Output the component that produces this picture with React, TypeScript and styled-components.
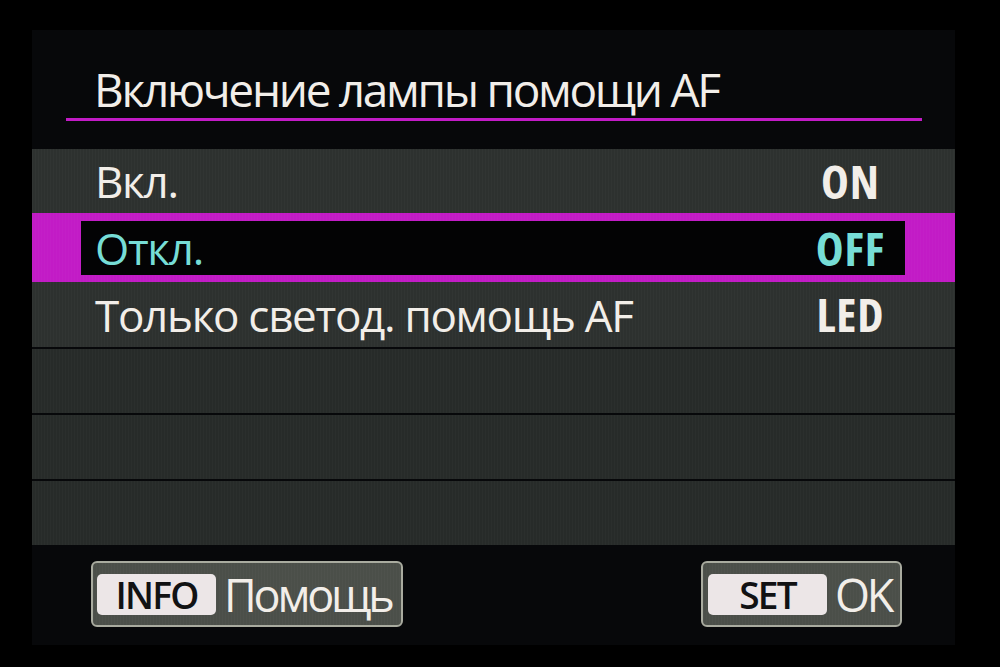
import React from "react";
import styled, { createGlobalStyle } from "styled-components";

const Global = createGlobalStyle`
  html, body { margin: 0; padding: 0; background: #000; }
  body { font-family: "Open Sans", "DejaVu Sans", sans-serif; }
  * { box-sizing: border-box; }
`;

const MAGENTA = "#c21bc6";
const CYAN = "#76ddd6";
const WHITE = "#f2eee9";

const Frame = styled.div`
  width: 1000px;
  height: 667px;
  background: #000;
  padding: 30px 0 0 32px;
`;

const Screen = styled.div`
  width: 923px;
  height: 615px;
  background: #07080a;
  display: flex;
  flex-direction: column;
`;

const Header = styled.header`
  height: 119px;
  padding-top: 33px;
  display: flex;
  flex-direction: column;
`;

const Title = styled.h1`
  margin: 0;
  padding-left: 62px;
  font-family: "Open Sans", "DejaVu Sans", sans-serif;
  font-weight: 400;
  font-size: 46px;
  line-height: 52px;
  letter-spacing: -2.3px;
  color: ${WHITE};
  white-space: nowrap;
`;

const Rule = styled.div`
  height: 3px;
  margin: 3px 33px 0 34px;
  background: ${MAGENTA};
`;

const List = styled.div`
  display: flex;
  flex-direction: column;
`;

const stripes = `repeating-linear-gradient(90deg, rgba(255,255,255,0.018) 0 1px, rgba(0,0,0,0) 1px 3px)`;

const Row = styled.div<{ $selected?: boolean; $height: number; $gap?: number; $dim?: boolean }>`
  height: ${(p) => p.$height}px;
  margin-top: ${(p) => p.$gap ?? 0}px;
  padding: ${(p) => (p.$selected ? "8px 50px 7px 49px" : "0 50px 0 49px")};
  background: ${(p) => (p.$selected ? MAGENTA : p.$dim ? "#272b29" : "#2d312f")};
  background-image: ${stripes};
  display: flex;
`;

const RowInner = styled.div<{ $selected?: boolean }>`
  flex: 1;
  display: grid;
  grid-template-columns: 1fr 110px;
  align-items: center;
  padding-left: 14px;
  background: ${(p) => (p.$selected ? "#030304" : "transparent")};
  color: ${(p) => (p.$selected ? CYAN : WHITE)};
`;

const Label = styled.span`
  font-size: 44px;
  line-height: 1;
  letter-spacing: -1.3px;
  white-space: nowrap;
`;

const Value = styled.span`
  text-align: center;
  font-size: 47px;
  font-weight: 700;
  font-stretch: 85%;
  line-height: 1;
  letter-spacing: 0.8px;
  text-indent: 0.8px;
  white-space: nowrap;
`;

const Footer = styled.footer`
  flex: 1;
  display: flex;
  justify-content: space-between;
  align-items: flex-start;
  padding: 16px 53px 0 59px;
`;

const KeyGroup = styled.div<{ $width: number; $padLeft: number }>`
  width: ${(p) => p.$width}px;
  height: 66px;
  border: 2px solid #a9ab9f;
  border-radius: 6px;
  background: #4b4f49;
  background-image: ${stripes};
  display: flex;
  align-items: center;
  padding-left: ${(p) => p.$padLeft}px;
`;

const KeyPill = styled.span`
  width: 119px;
  height: 41px;
  border-radius: 5px;
  background: #ece6e7;
  color: #111213;
  display: flex;
  align-items: center;
  justify-content: center;
  font-size: 37px;
  font-weight: 600;
  letter-spacing: -1.8px;
  line-height: 1;
`;

const KeyLabel = styled.span`
  margin-left: 8px;
  color: ${WHITE};
  font-size: 45px;
  line-height: 1;
  letter-spacing: -3.2px;
  white-space: nowrap;
`;

const options = [
  { label: "Вкл.", value: "ON", height: 64 },
  { label: "Откл.", value: "OFF", height: 69, selected: true },
  { label: "Только светод. помощь AF", value: "LED", height: 65 },
];

export default function App() {
  return (
    <Frame>
      <Global />
      <Screen>
        <Header>
          <Title>Включение лампы помощи AF</Title>
          <Rule />
        </Header>
        <List>
          {options.map((o) => (
            <Row key={o.value} $selected={o.selected} $height={o.height}>
              <RowInner $selected={o.selected}>
                <Label>{o.label}</Label>
                <Value>{o.value}</Value>
              </RowInner>
            </Row>
          ))}
          <Row $height={64} $gap={2} $dim />
          <Row $height={64} $gap={2} $dim />
          <Row $height={64} $gap={2} $dim />
        </List>
        <Footer>
          <KeyGroup $width={312} $padLeft={4}>
            <KeyPill>INFO</KeyPill>
            <KeyLabel>Помощь</KeyLabel>
          </KeyGroup>
          <KeyGroup $width={201} $padLeft={5}>
            <KeyPill>SET</KeyPill>
            <KeyLabel>OK</KeyLabel>
          </KeyGroup>
        </Footer>
      </Screen>
    </Frame>
  );
}
